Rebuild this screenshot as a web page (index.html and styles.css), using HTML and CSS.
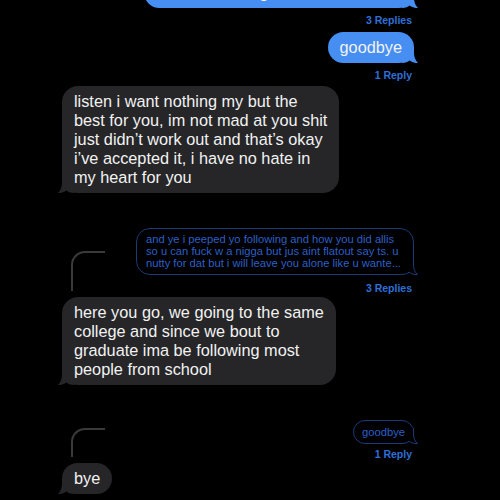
FILE: index.html
```html
<!DOCTYPE html>
<html>
<head>
<meta charset="utf-8">
<link rel="stylesheet" href="styles.css">
</head>
<body>
<div class="chat">
  <div class="bubble blue clipped">thanks for the good times tho fr fr<svg class="tail tail-r" width="16" height="16" viewBox="0 0 16 16"><path d="M0 0H12V6C12 10 13.5 13.5 16 16C12.5 16.3 9.5 15.2 7.5 13.6C6 15 3.5 16 0 16Z"/></svg></div>
  <div class="replies">3 Replies</div>
  <div class="bubble blue">goodbye<svg class="tail tail-r" width="16" height="16" viewBox="0 0 16 16"><path d="M0 0H12V6C12 10 13.5 13.5 16 16C12.5 16.3 9.5 15.2 7.5 13.6C6 15 3.5 16 0 16Z"/></svg></div>
  <div class="replies">1 Reply</div>
  <div class="bubble gray first">listen i want nothing my but the<br>best for you, im not mad at you shit<br>just didn’t work out and that’s okay<br>i’ve accepted it, i have no hate in<br>my heart for you<svg class="tail tail-l" width="16" height="16" viewBox="0 0 16 16"><path d="M0 0H12V6C12 10 13.5 13.5 16 16C12.5 16.3 9.5 15.2 7.5 13.6C6 15 3.5 16 0 16Z"/></svg></div>

  <div class="thread">
    <div class="quote long"><svg class="otail" width="16" height="16" viewBox="0 0 16 16"><path class="ofill" d="M0 0H11.5V6C11.5 10 13 13.5 15.5 15.5C12 15.8 9 14.8 7 13.2C5.5 14.5 3 15.5 0 15.5Z"/><path class="oline" d="M11.5 0V6C11.5 10 13 13.5 15.5 15.5C12 15.8 9 14.8 7 13.2C5.5 14.5 3 15.5 0 15.5"/></svg><span class="qtext">and ye i peeped yo following and how you did allis<br>so u can fuck w a nigga but jus aint flatout say ts. u<br>nutty for dat but i will leave you alone like u wante...</span></div>
    <div class="replies q">3 Replies</div>
    <div class="bubble gray threaded tall">here you go, we going to the same<br>college and since we bout to<br>graduate ima be following most<br>people from school<svg class="tail tail-l" width="16" height="16" viewBox="0 0 16 16"><path d="M0 0H12V6C12 10 13.5 13.5 16 16C12.5 16.3 9.5 15.2 7.5 13.6C6 15 3.5 16 0 16Z"/></svg></div>
  </div>

  <div class="thread">
    <div class="quote short"><svg class="otail" width="16" height="16" viewBox="0 0 16 16"><path class="ofill" d="M0 0H11.5V6C11.5 10 13 13.5 15.5 15.5C12 15.8 9 14.8 7 13.2C5.5 14.5 3 15.5 0 15.5Z"/><path class="oline" d="M11.5 0V6C11.5 10 13 13.5 15.5 15.5C12 15.8 9 14.8 7 13.2C5.5 14.5 3 15.5 0 15.5"/></svg><span class="qtext">goodbye</span></div>
    <div class="replies r">1 Reply</div>
    <div class="bubble gray threaded low">bye<svg class="tail tail-l" width="16" height="16" viewBox="0 0 16 16"><path d="M0 0H12V6C12 10 13.5 13.5 16 16C12.5 16.3 9.5 15.2 7.5 13.6C6 15 3.5 16 0 16Z"/></svg></div>
  </div>
</div>
</body>
</html>
```
FILE: styles.css
```css
* { box-sizing: border-box; }

body {
  margin: 0;
  width: 500px;
  height: 500px;
  overflow: hidden;
  background: #000;
  font-family: "Liberation Sans", Arial, sans-serif;
}

.chat {
  display: flex;
  flex-direction: column;
  padding: 0 86px 0 62px;
}

.bubble {
  position: relative;
  padding: 6px 12px;
  border-radius: 16px;
  font-size: 16.3px;
  line-height: 19px;
  color: #f2f2f2;
  white-space: nowrap;
}

.blue {
  align-self: flex-end;
  background: #468ef1;
  margin-top: 5px;
}
.blue .tail { fill: #468ef1; }

.clipped {
  width: 270px;
  margin-top: -23px;
}

.gray {
  align-self: flex-start;
  background: #262628;
}
.gray .tail { fill: #262628; }

.first { margin-top: 4px; }

.tail {
  position: absolute;
  bottom: 0;
  display: block;
}
.tail-r { right: -4px; }
.tail-l { left: -4px; transform: scaleX(-1); }

.replies {
  align-self: flex-end;
  margin: 5px 2px 0 0;
  font-size: 10.5px;
  font-weight: 700;
  line-height: 14px;
  color: #2f6fd9;
}
.replies.q { margin-top: 6px; }
.replies.r { margin-top: 3px; }

.thread {
  display: flex;
  flex-direction: column;
  margin-top: 35px;
}

.quote {
  position: relative;
  align-self: flex-end;
  border: 1px solid #1b3a7a;
  color: #2d5fc8;
  font-size: 11.2px;
  white-space: nowrap;
}
.qtext {
  position: relative;
}
.quote.long {
  width: 278px;
  padding: 4px 12px 5px 9px;
  line-height: 12px;
  border-radius: 14px;
}
.quote.short {
  padding: 5px 8px;
  line-height: 12px;
  border-radius: 12px;
}

.otail {
  position: absolute;
  right: -5px;
  bottom: -1px;
  display: block;
}
.ofill { fill: #000; }
.oline { fill: none; stroke: #1b3a7a; stroke-width: 1; }

.threaded { margin-top: 2px; }

.threaded::before {
  content: "";
  position: absolute;
  left: 9px;
  bottom: calc(100% + 6px);
  width: 32px;
  border-left: 2.5px solid #3a3a3c;
  border-top: 2.5px solid #3a3a3c;
  border-top-left-radius: 14px;
}
.tall::before { height: 38px; }
.low::before { height: 27px; }
```
